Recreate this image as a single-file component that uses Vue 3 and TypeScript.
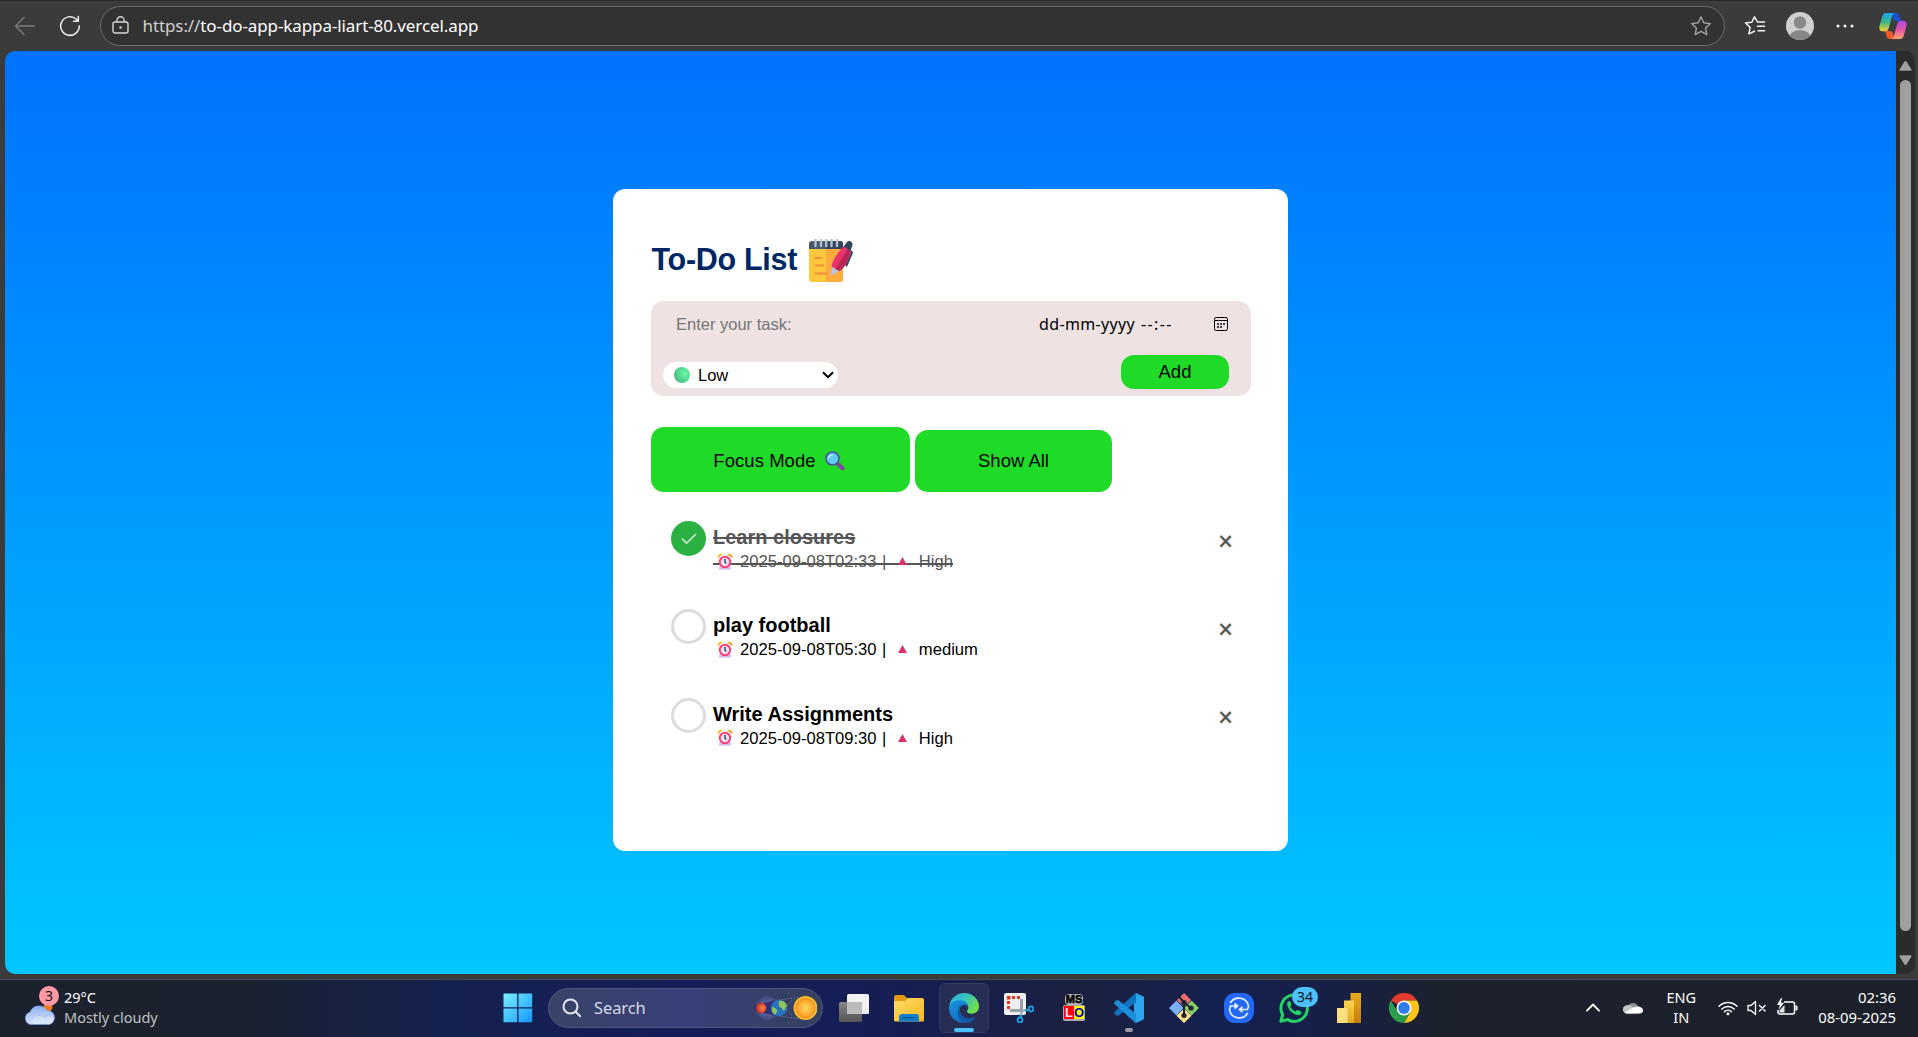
<script setup lang="ts">
import { ref } from 'vue'

interface Task {
  title: string
  due: string
  priority: string
  done: boolean
}

const tasks = ref<Task[]>([
  { title: 'Learn closures', due: '2025-09-08T02:33', priority: 'High', done: true },
  { title: 'play football', due: '2025-09-08T05:30', priority: 'medium', done: false },
  { title: 'Write Assignments', due: '2025-09-08T09:30', priority: 'High', done: false },
])

const toggle = (task: Task) => {
  task.done = !task.done
}
const remove = (index: number) => {
  tasks.value.splice(index, 1)
}
</script>

<template>
  <div class="screen">
    <header class="toolbar">
      <svg class="back" width="22" height="20" viewBox="0 0 22 20" fill="none" stroke="#7c7c7c" stroke-width="1.3" stroke-linecap="round" stroke-linejoin="round"><path d="M20.5 10H1.5M10 1.5L1.5 10l8.500 8.500" /></svg>
      <svg class="reload" width="22" height="22" viewBox="0 0 22 22" fill="none" stroke="#f2f2f2" stroke-width="1.5" stroke-linecap="round" stroke-linejoin="round"><path d="M20.300 11a9.300 9.300 0 1 1-3-6.800L19.300 6M19.300 1.500V6.300H14.500" /></svg>
      <div class="address">
        <svg class="lock" width="17" height="18" viewBox="0 0 17 18" fill="none" stroke="#d6d6d6" stroke-width="1.4"><rect x="1" y="6" width="15" height="11" rx="2" /><path d="M4.800 6V4.500a3.700 3.700 0 0 1 7.400 0V6" /><circle cx="8.500" cy="11.500" r="1.200" fill="#d6d6d6" stroke="none" /></svg>
        <span class="url"><span class="scheme">https://</span>to-do-app-kappa-liart-80.vercel.app</span>
        <svg class="fav" width="22" height="22" viewBox="0 0 22 22" fill="none" stroke="#a3a3a3" stroke-width="1.4" stroke-linejoin="round"><path d="M11 1.800l2.800 6 6.600.8-4.800 4.500 1.200 6.500L11 16.400l-5.800 3.200 1.200-6.500L1.600 8.600l6.600-.8z" /></svg>
      </div>
      <svg class="favlist" width="22" height="22" viewBox="0 0 22 22" fill="none" stroke="#f4f4f4" stroke-width="1.500" stroke-linejoin="round" stroke-linecap="round"><path d="M20.500 11.200h-7M20.500 15.700h-6.500M20.500 7H13.500L10.500 1.800 7.800 7.200l-6.300.8 4.600 4.400-1.200 6.500 5.600-2.600" /></svg>
      <svg class="avatar" width="28" height="28" viewBox="0 0 28 28"><defs><clipPath id="av"><circle cx="14" cy="14" r="14" /></clipPath></defs><g clip-path="url(#av)"><rect width="28" height="28" fill="#d2d0ce" /><circle cx="14" cy="10.500" r="6.200" fill="#8a8886" /><ellipse cx="14" cy="25.500" rx="10.500" ry="7.500" fill="#8a8886" /></g></svg>
      <svg class="dots" width="18" height="4" viewBox="0 0 18 4" fill="#f4f4f4"><circle cx="2" cy="2" r="1.500" /><circle cx="9" cy="2" r="1.500" /><circle cx="16" cy="2" r="1.500" /></svg>
      <svg class="copilot" width="28" height="26" viewBox="0 0 28 26">
        <defs>
          <linearGradient id="cp1" x1="0" y1="0" x2="0" y2="1"><stop offset="0" stop-color="#1ba4f5" /><stop offset=".5" stop-color="#3bb586" /><stop offset="1" stop-color="#f7d12e" /></linearGradient>
          <linearGradient id="cp2" x1="0" y1="0" x2="0" y2="1"><stop offset="0" stop-color="#a54bf0" /><stop offset=".5" stop-color="#e854a4" /><stop offset="1" stop-color="#ffa26a" /></linearGradient>
        </defs>
        <path d="M13 0h4c2 0 3 1 3.500 3l1.500 5h-5c-2 0-3-2-3.500-4z" fill="#1a4fd0" />
        <path d="M15 26h-4c-2 0-3-1-3.500-3L6 18h5c2 0 3 2 3.500 4z" fill="#f4572e" />
        <path d="M7 0h9c-1.500 0-2.300 1-2.800 3l-3.400 12c-.6 2-1.500 3.300-3.500 3.300H4C1 18.300-.3 16 .5 13L3 4c.8-2.600 2-4 4-4z" fill="url(#cp1)" />
        <path d="M21 26h-9c1.500 0 2.300-1 2.800-3l3.400-12c.6-2 1.500-3.300 3.500-3.300H24c3 0 4.300 2.300 3.500 5.300L25 22c-.8 2.600-2 4-4 4z" fill="url(#cp2)" />
      </svg>
    </header>

    <div class="viewport">
      <main class="page">
        <section class="card">
          <h2>
            <span>To-Do List</span>
            <svg width="44" height="43" viewBox="0 0 44 43">
              <path d="M0 8h34v32a3 3 0 0 1-3 3H3a3 3 0 0 1-3-3z" fill="#ffc73b" />
              <path d="M17 8h17v32a3 3 0 0 1-3 3H17z" fill="#ffab3d" />
              <path d="M3 2h28a3 3 0 0 1 3 3v5H0V5a3 3 0 0 1 3-3z" fill="#465a6b" />
              <path d="M17 2h14a3 3 0 0 1 3 3v5H17z" fill="#32485a" />
              <path d="M6.500 1v6M12 1v6M17.200 1v6M22.500 1v6M28 1v6" stroke="#b9bfd6" stroke-width="2.400" stroke-linecap="round" />
              <path d="M6.500 19h6M6.500 26.500h8M6.500 34.500h11" stroke="#f28a3d" stroke-width="2" stroke-linecap="round" />
              <path d="M39 9.500l4 4-5.500 13" stroke="#32485a" stroke-width="2" fill="none" stroke-linejoin="round" stroke-linecap="round" />
              <path d="M21 37.500l3-11 7 5z" fill="#b9c3dc" />
              <path d="M22.500 27.500c1-6 6-14 12.500-20.500l7 4.500C40 20 36.500 28 30.500 32z" fill="#e9326a" />
              <path d="M26.500 30L39 9.500l3 2C40 20 36.500 28 30.500 32z" fill="#b92756" />
              <path d="M34.500 7.500L38 3c1.500-2 6-.5 5.500 3l-2 5.700z" fill="#32485a" />
            </svg>
          </h2>

          <form class="entry" @submit.prevent>
            <div class="entry-line">
              <input type="text" placeholder="Enter your task:" />
              <span class="date">dd-mm-yyyy <span class="time">--:--</span></span>
              <svg width="14" height="14" viewBox="0 0 14 14"><rect x=".5" y=".5" width="13" height="13" rx="1.800" fill="none" stroke="#000" /><path d="M.5 3.500h13" stroke="#000" /><path d="M3 6h2v2H3zM6 6h2v2H6zM9 6h2v2H9zM3 9h2v2H3zM6 9h2v2H6z" fill="#444" /></svg>
            </div>
            <div class="entry-line second">
              <div class="select">
                <i class="low-dot"></i>
                <span>Low</span>
                <svg width="12" height="8" viewBox="0 0 12 8" fill="none" stroke="#000" stroke-width="2"><path d="M1 1.200l5 5 5-5" /></svg>
              </div>
              <button class="add" type="submit">Add</button>
            </div>
          </form>

          <div class="filters">
            <button class="focus" type="button">
              <span>Focus Mode</span>
              <svg width="20" height="20" viewBox="0 0 20 20"><path d="M12 12l5.500 5.500" stroke="#7e4a9c" stroke-width="4" stroke-linecap="round" /><circle cx="7.500" cy="7.500" r="6.500" fill="#5fcbf0" stroke="#4a4fa0" stroke-width="1.600" /><path d="M3.800 7a4 4 0 0 1 3.400-3.200" stroke="#b8ecfb" stroke-width="1.400" fill="none" stroke-linecap="round" /></svg>
            </button>
            <button class="all" type="button"><span>Show All</span></button>
          </div>

          <ul>
            <li v-for="(task, i) in tasks" :key="task.title" :class="{ done: task.done }">
              <span class="check" @click="toggle(task)">
                <svg v-if="task.done" width="16" height="12" viewBox="0 0 16 12" fill="none" stroke="#d9f3dd" stroke-width="1.500"><path d="M1 5.500l4.500 4.800L15 1" /></svg>
              </span>
              <div class="body">
                <strong>{{ task.title }}</strong>
                <div class="meta">
                  <svg class="clock" width="16" height="17" viewBox="0 0 16 17">
                    <rect x="2" y="13.200" width="12" height="3.500" rx=".6" fill="#d5c3f2" />
                    <path d="M.3 4.200C.5 1.500 3 0 5.800.9L1.500 5z" fill="#f9bd3c" />
                    <path d="M15.700 4.200C15.500 1.500 13 0 10.200.9L14.500 5z" fill="#f0a43a" />
                    <circle cx="8" cy="9" r="5.200" fill="#e6e4fb" stroke="#f5426e" stroke-width="2" />
                    <path d="M8 6v3l1.200 1.500" stroke="#473057" stroke-width="1.300" fill="none" />
                  </svg>
                  <span class="due">{{ task.due }}</span>
                  <span class="bar">|</span>
                  <svg class="tri" width="9" height="8" viewBox="0 0 9 8"><path d="M4.500 0L9 8H0z" fill="#dc3367" /></svg>
                  <span class="prio">{{ task.priority }}</span>
                </div>
              </div>
              <span class="remove" @click="remove(i)">×</span>
            </li>
          </ul>
        </section>
      </main>
      <aside class="scroll">
        <svg width="13" height="10" viewBox="0 0 13 10"><path d="M5.300.8a1.400 1.400 0 0 1 2.400 0l4.800 7.600c.3.700 0 1.300-.8 1.300H1.300C.5 9.700.2 9.100.5 8.400z" fill="#9f9f9f" /></svg>
        <div class="thumb"></div>
        <svg width="13" height="10" viewBox="0 0 13 10"><path d="M5.300 9.200a1.400 1.400 0 0 0 2.400 0l4.800-7.600c.3-.7 0-1.300-.8-1.300H1.300C.5.300.2.900.5 1.600z" fill="#9f9f9f" /></svg>
      </aside>
    </div>

    <footer class="taskbar">
      <div class="weather">
        <div class="cloud">
          <svg width="32" height="22" viewBox="0 0 32 22">
            <defs><linearGradient id="cl" x1="0" y1="0" x2="0" y2="1"><stop offset="0" stop-color="#8fb2f5" /><stop offset="1" stop-color="#d6e3fb" /></linearGradient></defs>
            <circle cx="24" cy="3" r="4.500" fill="#f27a1a" />
            <path d="M7 20.500a6.300 6.300 0 0 1-1-12.300A9.500 9.500 0 0 1 23 6.500a7.100 7.100 0 0 1 2 14z" fill="url(#cl)" stroke="#7b9fe8" stroke-width=".7" />
            <path d="M9 20c-2-7 8-11 12-5 4-4 9-2 8.500 1-.5 3-2.500 4-5 4z" fill="#dce8fc" opacity=".7" />
          </svg>
          <span class="alert">3</span>
        </div>
        <div class="forecast"><span class="temp">29°C</span><span class="sky">Mostly cloudy</span></div>
      </div>

      <div class="apps">
        <svg class="start" width="30" height="30" viewBox="0 0 30 30">
          <defs><linearGradient id="win" x1="0" y1="0" x2="1" y2="1"><stop offset="0" stop-color="#7df0ff" /><stop offset=".5" stop-color="#45c4ff" /><stop offset="1" stop-color="#1496fb" /></linearGradient></defs>
          <path d="M.500 .500h13.700v13.700H.500zM15.500.500h13.700v13.700H15.500zM.500 15.500h13.700v13.700H.500zM15.500 15.500h13.700v13.700H15.500z" fill="url(#win)" />
        </svg>
        <div class="search">
          <svg width="20" height="20" viewBox="0 0 20 20" fill="none" stroke="#e4e7f2" stroke-width="2" stroke-linecap="round"><circle cx="8.500" cy="8.500" r="7" /><path d="M13.700 13.700l4.500 4.500" /></svg>
          <span>Search</span>
          <svg width="66" height="30" viewBox="0 0 66 30">
            <defs>
              <radialGradient id="sun"><stop offset="0" stop-color="#ffd65a" /><stop offset=".65" stop-color="#fba832" /><stop offset=".8" stop-color="#f58e20" /><stop offset=".88" stop-color="#f9c42e" /><stop offset="1" stop-color="#f0b72a" /></radialGradient>
              <radialGradient id="aura"><stop offset="0" stop-color="#7a72c4" /><stop offset="1" stop-color="#7a72c4" stop-opacity="0" /></radialGradient>
              <radialGradient id="mars" cx=".65"><stop offset="0" stop-color="#ff8a4a" /><stop offset="1" stop-color="#cf3325" /></radialGradient>
            </defs>
            <path d="M3 10L16 1l14 9v11L16 29 3 20z" fill="url(#aura)" />
            <path d="M3 12l24-5v16L3 18z" fill="#302f72" />
            <path d="M28 7l24-3M28 23l24 3M34 15l8-8M34 15l8 8" stroke="#8b90ad" stroke-width=".9" stroke-dasharray="1 2" />
            <circle cx="10" cy="15" r="5.200" fill="url(#mars)" />
            <circle cx="28" cy="15" r="8.200" fill="#2671bd" />
            <path d="M28 8c4-1 7 1 8 5-1 1-2 2-2 4-2 1-3 0-3-2-3 0-4-4-3-7zM21 14c3 0 6 3 5 5l-2 3c-3-2-4-5-3-8z" fill="#8fc45c" />
            <circle cx="54.500" cy="15" r="12" fill="url(#sun)" />
          </svg>
        </div>

        <div class="slot"><svg width="30" height="30" viewBox="0 0 30 30"><defs><linearGradient id="tv" x1="0" y1="0" x2="0" y2="1"><stop offset="0" stop-color="#858585" /><stop offset="1" stop-color="#555" /></linearGradient></defs><rect x="0" y="9" width="23" height="20" rx="1.500" fill="url(#tv)" /><rect x="8" y="1" width="22" height="20" rx="1.500" fill="#f1f1f1" /><path d="M8 9h15v12H9.500A1.500 1.500 0 0 1 8 19.500z" fill="#bcbcbc" /></svg></div>
        <div class="slot"><svg width="30" height="30" viewBox="0 0 30 30"><defs><linearGradient id="fo" x1="0" y1="0" x2="1" y2="1"><stop offset="0" stop-color="#ffdc6a" /><stop offset="1" stop-color="#f9b91f" /></linearGradient></defs><path d="M0 4a2 2 0 0 1 2-2h8l3 3h8v6H0z" fill="#e09a0b" /><path d="M0 8h11l3-3h14a2 2 0 0 1 2 2v20a1.500 1.500 0 0 1-1.500 1.500h-27A1.500 1.500 0 0 1 0 27z" fill="url(#fo)" /><path d="M5 28.500V24a3 3 0 0 1 3-3h14a3 3 0 0 1 3 3v4.500z" fill="#1380cf" /><path d="M9 24.700h12" stroke="#075a9f" stroke-width="1.400" stroke-linecap="round" /></svg></div>
        <div class="slot active"><svg width="30" height="30" viewBox="0 0 30 30">
          <defs><linearGradient id="e1" x1="0" y1="0" x2="1" y2=".5"><stop offset="0" stop-color="#2aa9e0" /><stop offset=".5" stop-color="#35c4c7" /><stop offset="1" stop-color="#6fe04a" /></linearGradient><linearGradient id="e2" x1="0" y1="0" x2="1" y2="1"><stop offset="0" stop-color="#1795e0" /><stop offset="1" stop-color="#0f62b4" /></linearGradient></defs>
          <path d="M.3 13C1.300 5.500 7.500 0 15 0c8.500 0 15 6 15 13.500 0 4.300-3.300 7.200-7.300 7.200-3.500 0-4.700-1.300-4.700-2.300 0-.9 1.300-1.500 1.300-3.900 0-3.600-3.200-6.500-7.800-6.500C6.500 8 2.300 10 .3 13z" fill="url(#e1)" />
          <path d="M.2 14c1-4 5.500-6.700 10.800-6.700 4.500 0 8.300 3 8.300 7.200-1-2-2.800-3-4.800-2.600-3.300.8-4.500 4.100-3.500 7.600 1.500 5 7.500 7.700 14 5.200.9-.3 1.300.3.800 1C23.500 28.500 19.500 30 15 30 6.500 30-.6 23 .2 14z" fill="url(#e2)" />
          <path d="M11.300 12.500c-3.600 3.500-4.300 12.500 3.200 17.500 3 .2 8.500-1 11.300-4.300.5-.7.100-1.300-.8-1-6.500 2.500-12.500-.2-14-5.200-.8-2.800-.3-5.300 1.500-7z" fill="#1258a8" />
        </svg></div>
        <div class="slot"><svg width="30" height="30" viewBox="0 0 30 30"><rect x="0" y="0" width="22" height="22" rx="2" fill="#eceef1" /><path d="M16 6h3v11l-2 2H6v-3h10z" fill="#9ba1a9" /><path d="M3 3h3.500v3.500H3zM8 3h3v3H8zM13 3h3v3h-3zM3 8h3v3H3zM3 13h3v3H3z" fill="#d83b1c" /><path d="M17 18l9-1.500M18 17l-1.500 8" stroke="#9aa2ab" stroke-width="2" /><circle cx="27" cy="16" r="2.400" fill="none" stroke="#2398dc" stroke-width="2" /><circle cx="16" cy="27" r="2.400" fill="none" stroke="#2398dc" stroke-width="2" /><path d="M21 17.500l4-.8M17.500 21.500l-.8 3.500" stroke="#2398dc" stroke-width="2" /></svg></div>
        <div class="slot"><div class="mso"><span>MS</span><b><i>L</i><em>O</em></b></div></div>
        <div class="slot running"><svg width="30" height="30" viewBox="0 0 30 30"><path d="M22 0l7 3.200c.7.300 1 .8 1 1.500v20.600c0 .7-.3 1.200-1 1.500L22 30l-2-1.500V1.500z" fill="#2aa5f0" /><path d="M20.500 1L.7 18.800c-.8.700-.8 1.500 0 2.200L2.600 22.600c.7.500 1.300.4 2 0L22 9.200V0c-.6 0-1.100.500-1.500 1z" fill="#0d74bd" /><path d="M20.500 29L.7 11.200c-.8-.7-.8-1.500 0-2.200L2.600 7.400c.7-.5 1.300-.4 2 0L22 20.800V30c-.6 0-1.100-.500-1.500-1z" fill="#1c8ddb" /></svg></div>
        <div class="slot"><svg width="30" height="30" viewBox="0 0 30 30"><path d="M15 0l7 7-7 7-7-7z" fill="#f26d6d" /><path d="M7.500 7.500l7 7.500-7 7.500L0 15z" fill="#7ab0f5" /><path d="M22.500 7.500L30 15l-7.500 7.500-7.500-7.500z" fill="#86cf6b" /><path d="M15 15.500l7.500 7.300L15 30l-7.500-7.200z" fill="#fbe084" /><path d="M10 3.500l5 6v13M15 9.500l7 5.500" stroke="#1f2338" stroke-width="2" fill="none" /><circle cx="15" cy="9.500" r="2.600" fill="#1f2338" /><circle cx="22" cy="15" r="2.600" fill="#1f2338" /><circle cx="15" cy="22.500" r="2.600" fill="#1f2338" /></svg></div>
        <div class="slot"><svg width="30" height="30" viewBox="0 0 30 30" fill="none" stroke="#e9f0ff" stroke-width="1.700"><rect width="30" height="30" rx="11" fill="#2468fa" stroke="none" /><path d="M6.300 10A9.800 9.800 0 0 1 24.500 13.500L23.500 16.500H15.500M23.700 20A9.800 9.800 0 0 1 5.500 16.500L6.500 13H13.500M18.500 14l-3 2.500 3 2.500M10.500 10.500l3 2.500-3 2.500" /></svg></div>
        <div class="slot wa"><svg width="30" height="30" viewBox="0 0 30 30"><path d="M1.800 28.300l1.900-6.600A13.200 13.200 0 1 1 8.600 26.600z" fill="none" stroke="#25d366" stroke-width="3" stroke-linejoin="round" /><path d="M10 8c-1.800.7-2.200 2.500-1.700 4.300 1.500 5 5 8.500 10 9.800 2 .5 3.600-.3 4-2.100.2-.8 0-1.200-.5-1.500l-2.800-1.400c-.6-.3-1-.2-1.400.3l-1 1.200c-2.400-1-4.200-2.600-5.400-5l1-1.300c.3-.4.3-.8.1-1.200L11.200 8.500c-.3-.5-.6-.7-1.200-.5z" fill="#25d366" /></svg><span class="count">34</span></div>
        <div class="slot"><svg width="24" height="30" viewBox="0 0 24 30"><defs><linearGradient id="p1" x1="0" y1="0" x2="0" y2="1"><stop offset="0" stop-color="#e8ab18" /><stop offset="1" stop-color="#c9790e" /></linearGradient><linearGradient id="p2" x1="0" y1="0" x2="0" y2="1"><stop offset="0" stop-color="#f8d654" /><stop offset="1" stop-color="#e3a91c" /></linearGradient></defs><rect x="13.500" y="0" width="10.500" height="30" fill="url(#p1)" /><rect x="7" y="7.500" width="10" height="22.500" fill="url(#p2)" /><rect x="0" y="15" width="10.500" height="15" fill="#f9df7e" /></svg></div>
        <div class="slot"><svg width="30" height="30" viewBox="0 0 30 30"><path d="M15 15L2 7.500A15 15 0 0 1 28 7.500H15z" fill="#e33b2e" /><path d="M28 7.500A15 15 0 0 1 15 30L21.500 18.800 15 7.500z" fill="#fcc419" /><path d="M2 7.500A15 15 0 0 0 15 30l6.500-11.200H8.500z" fill="#2c9c4b" /><circle cx="15" cy="15" r="7.500" fill="#fff" /><circle cx="15" cy="15" r="5.900" fill="#2f7de8" /></svg></div>
      </div>

      <div class="tray">
        <svg class="chev" width="14" height="9" viewBox="0 0 14 9" fill="none" stroke="#fff" stroke-width="1.800" stroke-linecap="round" stroke-linejoin="round"><path d="M1 7.700l6-6.200 6 6.200" /></svg>
        <svg class="drive" width="20" height="13" viewBox="0 0 20 13"><path d="M5 6a5.200 5.200 0 0 1 10-.5L17 9H6z" fill="#8e8e93" /><path d="M4 12.500A4 4 0 0 1 4 4.200c3-.8 5 .8 7 2.800l4 5.500z" fill="#c5c5c8" /><path d="M1.500 11.500l9-5C15 4 20 6 20 9.500c0 1.800-1.500 3-3.500 3H4c-1 0-1.800-.3-2.500-1z" fill="#fff" /></svg>
        <div class="lang"><span>ENG</span><span>IN</span></div>
        <svg class="wifi" width="20" height="16" viewBox="0 0 20 16" fill="none" stroke="#fff" stroke-width="1.500" stroke-linecap="round"><path d="M1 6.300a12.500 12.500 0 0 1 18 0M3.800 9a8.800 8.800 0 0 1 12.400 0M6.500 11.600a5 5 0 0 1 7 0" /><circle cx="10" cy="13.700" r="1.500" fill="#fff" stroke="none" /></svg>
        <svg class="mute" width="20" height="16" viewBox="0 0 20 16" fill="none" stroke="#fff" stroke-width="1.300" stroke-linejoin="round"><path d="M1 5.500h3L8.500 1.500v13L4 10.500H1zM12 5l6.500 6.500M18.500 5L12 11.500" /></svg>
        <svg class="batt" width="21" height="18" viewBox="0 0 21 18"><path d="M7 4h8.500a2 2 0 0 1 2 2v8a2 2 0 0 1-2 2H3a2 2 0 0 1-2-2v-2" fill="none" stroke="#fff" stroke-width="1.500" /><path d="M18.500 7.500h1a1 1 0 0 1 1 1v3a1 1 0 0 1-1 1h-1z" fill="#fff" /><path d="M2.500 14.500v-2l5-5.500v7.500z" fill="#e5e5e5" /><path d="M4 0L0 7h3L1.500 12 7 4.800H3.800L5.200 0z" fill="#fff" /></svg>
        <div class="clock-text"><span>02:36</span><span>08-09-2025</span></div>
      </div>
    </footer>
  </div>
</template>

<style>
html,
body {
  margin: 0;
  overflow: hidden;
}
</style>

<style scoped>
* {
  box-sizing: border-box;
}
svg {
  display: block;
  flex: none;
}
.screen {
  width: 1918px;
  height: 1037px;
  display: flex;
  flex-direction: column;
  background: #3b3b3b;
  font-family: 'Liberation Sans', Arial, sans-serif;
  overflow: hidden;
}
.toolbar {
  height: 51px;
  flex: none;
  display: flex;
  align-items: center;
  border-top: 1px solid #2b2b2b;
  padding-left: 14px;
}
.reload {
  margin-left: 23px;
}
.address {
  width: 1625px;
  height: 40px;
  margin-left: 19px;
  border: 1px solid #6d6d6d;
  border-radius: 20px;
  background: #323232;
  display: flex;
  align-items: center;
  padding: 0 12px 0 11px;
}
.lock {
  margin-bottom: 2px;
}
.url {
  margin: 0 0 2px 13.500px;
  font: 17px 'Noto Sans', 'Open Sans', sans-serif;
  letter-spacing: -0.1px;
  color: #fff;
  white-space: nowrap;
}
.scheme {
  color: #cfcfcf;
}
.fav {
  margin-left: auto;
}
.favlist {
  margin-left: 19px;
}
.avatar {
  margin-left: 20px;
}
.dots {
  margin-left: 22px;
}
.copilot {
  margin-left: 25px;
}
.viewport {
  height: 923px;
  flex: none;
  display: flex;
  margin: 0 3px 0 5px;
  border-radius: 10px;
  overflow: hidden;
}
.page {
  width: 1891px;
  background: linear-gradient(180deg, #0072ff, #00c6ff);
  display: flex;
  justify-content: center;
  align-items: flex-start;
  padding-top: 138px;
}
.card {
  width: 675px;
  height: 662px;
  background: #fff;
  border-radius: 12px;
  padding: 50px 37px 0 38px;
}
h2 {
  display: flex;
  align-items: center;
  height: 43px;
  margin: 0 0 19px;
  gap: 12px;
  color: #002765;
  font-size: 30.500px;
  line-height: 41px;
}
h2 span {
  width: 146px;
  height: 43px;
  padding-left: 0.500px;
  letter-spacing: -0.300px;
  white-space: nowrap;
}
.entry {
  width: 600px;
  height: 95px;
  background: #eee2e2;
  border-radius: 13px;
  padding: 8px 0 0;
}
.entry-line {
  display: flex;
  align-items: center;
  height: 30px;
  padding: 0 23px 0 25px;
}
input {
  width: 363px;
  border: 0;
  padding: 0;
  outline: 0;
  background: none;
  font: 16.5px 'Liberation Sans', Arial, sans-serif;
}
input::placeholder {
  color: #757575;
  opacity: 1;
}
.date {
  width: 175px;
  font: 16px 'Noto Sans', 'Open Sans', sans-serif;
  letter-spacing: 0.350px;
  white-space: nowrap;
}
.time {
  margin-left: 1.500px;
  letter-spacing: 1.350px;
}
.second {
  height: 35px;
  margin-top: 15px;
  padding: 0 22px 0 12px;
  justify-content: space-between;
}
.select {
  width: 175px;
  height: 26px;
  margin-top: 7px;
  border-radius: 13px;
  background: #fff;
  display: flex;
  align-items: center;
  padding: 0 4px 0 11px;
  font-size: 16.5px;
}
.select svg {
  margin-left: auto;
}
.select span {
  margin-left: 8px;
}
.low-dot {
  width: 16px;
  height: 16px;
  border-radius: 50%;
  background: radial-gradient(circle at 70% 40%, #6dfca4, #4fc98a 60%, #4e9c82);
}
button {
  border: 0;
  background: #1fdb28;
  color: #000;
  font: 18.5px 'Liberation Sans', Arial, sans-serif;
  padding: 0;
}
.add {
  width: 108px;
  height: 34px;
  border-radius: 13px;
}
.filters {
  display: flex;
  align-items: flex-end;
  gap: 5px;
  margin-top: 31px;
}
.focus,
.all {
  display: flex;
  align-items: center;
  justify-content: center;
  border-radius: 13px;
}
.focus {
  width: 259px;
  height: 65px;
  gap: 9px;
  padding: 2px 3px 0 0;
}
.focus span {
  letter-spacing: 0.050px;
}
.all {
  width: 197px;
  height: 62px;
}
ul {
  list-style: none;
  margin: 29px 0 0;
  padding: 0 18px 0 20px;
}
li {
  display: flex;
  height: 88.300px;
}
.check {
  width: 35px;
  height: 35px;
  border: 2.500px solid #dcdcdc;
  border-width: 3px;
  border-radius: 50%;
  display: flex;
  align-items: center;
  justify-content: center;
}
.done .check {
  background: #2bb042;
  border-color: #2bb042;
}
.body {
  margin-left: 7px;
  padding-top: 4px;
}
strong {
  display: block;
  font-size: 20px;
  line-height: 24px;
}
.meta {
  display: flex;
  align-items: center;
  height: 24px;
  font-size: 16.600px;
  white-space: nowrap;
}
.meta span {
  padding-top: 2px;
}
.clock {
  margin-left: 3.500px;
}
.due {
  margin-left: 7.500px;
}
.bar {
  margin-left: 5.500px;
}
.tri {
  margin-left: 11.500px;
}
.prio {
  margin-left: 12px;
}
.done .body {
  color: #555;
}
.done strong {
  text-decoration: line-through 2px;
}
.done .meta {
  background: linear-gradient(#555, #555) 0 14px / 100% 2px no-repeat;
}
.remove {
  margin: 3.700px 0 0 auto;
  width: 15px;
  height: 32px;
  font-size: 25px;
  line-height: 32px;
  text-align: center;
  color: #555;
  -webkit-text-stroke: 0.5px #555;
}
.scroll {
  width: 19px;
  background: #2b2b2b;
  display: flex;
  flex-direction: column;
  align-items: center;
  padding: 10px 0 9px;
}
.thumb {
  width: 11px;
  height: 851px;
  margin: 9px 0 auto;
  border-radius: 6px;
  background: #9f9f9f;
}
.taskbar {
  height: 58px;
  margin-top: 5px;
  flex: none;
  display: flex;
  align-items: center;
  padding-bottom: 2px;
  border-top: 1px solid #454a52;
  background: linear-gradient(90deg, #1c222d 0, #1b212e 240px, #15214d 430px, #141d59 680px, #151e55 860px, #1b2041 1080px, #14214f 1220px, #162047 1320px, #1c212e 1440px, #1b202a 1918px);
  color: #fff;
  font-family: 'Noto Sans', 'Open Sans', sans-serif;
}
.weather {
  display: flex;
  width: 478px;
  padding-left: 24px;
}
.cloud {
  position: relative;
  width: 32px;
  height: 44px;
  padding-top: 18px;
}
.alert {
  position: absolute;
  left: 15px;
  top: 0;
  width: 20px;
  height: 20px;
  border-radius: 50%;
  background: #ff99a4;
  color: #111;
  font-size: 14px;
  line-height: 20px;
  text-align: center;
}
.forecast {
  display: flex;
  flex-direction: column;
  margin: 1px 0 0 8px;
  font-size: 14.5px;
  line-height: 20px;
}
.sky {
  color: #bfc1c5;
}
.apps {
  display: flex;
  align-items: center;
  height: 55px;
}
.start {
  margin-left: 24.500px;
}
.search {
  width: 275px;
  height: 40px;
  margin: 0 3.500px 0 15.500px;
  border: 1px solid #4c5780;
  border-radius: 20px;
  background: linear-gradient(90deg, #384367, #384079 50%, #33415f);
  display: flex;
  align-items: center;
  padding: 0 5px 0 13px;
}
.search span {
  margin: 0 auto 0 12px;
  font-size: 16.500px;
  letter-spacing: -0.100px;
  color: #d6d9e6;
}
.slot {
  position: relative;
  width: 55px;
  height: 50px;
  display: flex;
  align-items: center;
  justify-content: center;
}
.active {
  width: 50px;
  margin: 0 2.500px;
  border: 1px solid #343a61;
  border-radius: 6px;
  background: #272e56;
}
.active::after,
.running::after {
  content: '';
  position: absolute;
  left: 50%;
  bottom: 0;
  width: 20px;
  height: 4px;
  border-radius: 2px;
  background: #4cc2ff;
  transform: translateX(-50%);
}
.running::after {
  bottom: 1px;
  width: 8px;
  background: #9699a5;
}
.mso {
  width: 22px;
  display: flex;
  flex-direction: column;
  font: 900 11px/12px 'Liberation Sans', Arial, sans-serif;
  text-align: center;
}
.mso span {
  width: 18px;
  align-self: center;
  background: #b5b5b5;
  border-radius: 4px;
  line-height: 11px;
  color: #000;
  -webkit-text-stroke: 0.600px #000;
}
.mso b {
  display: flex;
  height: 16px;
  border: 1px solid #aaa;
  border-bottom-width: 2px;
  border-radius: 2px;
  font-size: 13px;
  line-height: 13px;
}
.mso i,
.mso em {
  flex: 1;
  font-style: normal;
  background: #f00;
  color: #f5d9ff;
}
.mso em {
  background: #ff0;
  color: #0000b8;
}
.count {
  position: absolute;
  left: 25.500px;
  top: 4px;
  width: 26px;
  height: 20px;
  border-radius: 10px;
  background: #4cc2ff;
  color: #111;
  font-size: 14px;
  line-height: 20px;
  text-align: center;
}
.tray {
  display: flex;
  align-items: center;
  margin-left: auto;
  padding-right: 22px;
  font-size: 14.500px;
  line-height: 20px;
}
.drive {
  margin-left: 23px;
}
.lang {
  width: 30px;
  margin: 0 22px 1px 23px;
  display: flex;
  flex-direction: column;
  align-items: center;
}
.mute {
  margin-left: 9px;
}
.batt {
  margin: 0 20px 1px 10px;
}
.clock-text {
  display: flex;
  flex-direction: column;
  align-items: flex-end;
  margin-bottom: 2px;
  font-size: 14.900px;
}
</style>
